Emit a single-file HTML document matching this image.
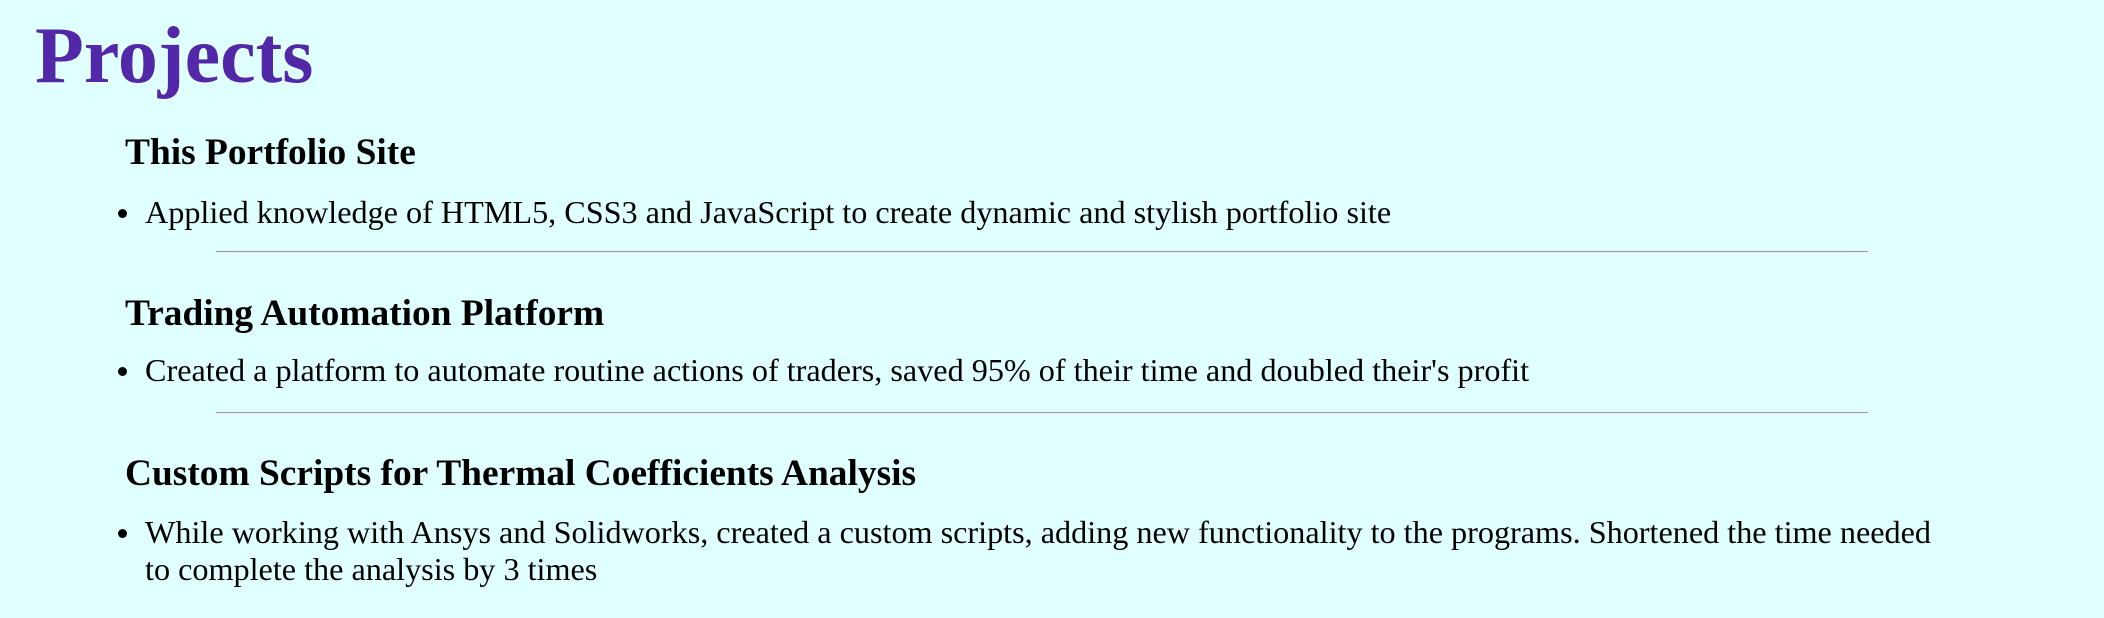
<!DOCTYPE html>
<html><head><meta charset="utf-8"><style>
html,body{margin:0;padding:0}
body{width:2104px;height:618px;background:#e0ffff;position:relative;overflow:hidden;font-family:"Liberation Serif",serif;color:#000}
.a{position:absolute;white-space:nowrap;line-height:1}
h1{position:absolute;margin:0;left:35px;top:16px;font-size:80px;line-height:1;color:#5228a8;font-weight:bold}
.h{font-size:37.4px;font-weight:bold;left:125px}
.t{font-size:32.2px;left:145px}
.d{position:absolute;width:9px;height:9px;border-radius:50%;background:#000;left:118px}
.hr{position:absolute;left:216px;width:1652px;height:1px;background:#999;border-bottom:1px solid #eee}
</style></head><body>
<h1>Projects</h1>
<div class="a h" style="top:134px">This Portfolio Site</div>
<div class="d" style="top:209px"></div>
<div class="a t" style="top:196px">Applied knowledge of HTML5, CSS3 and JavaScript to create dynamic and stylish portfolio site</div>
<div class="hr" style="top:251px"></div>
<div class="a h" style="top:295px">Trading Automation Platform</div>
<div class="d" style="top:367px"></div>
<div class="a t" style="top:354px">Created a platform to automate routine actions of traders, saved 95% of their time and doubled their's profit</div>
<div class="hr" style="top:412px"></div>
<div class="a h" style="top:455px">Custom Scripts for Thermal Coefficients Analysis</div>
<div class="d" style="top:529px"></div>
<div class="a t" style="top:516px">While working with Ansys and Solidworks, created a custom scripts, adding new functionality to the programs. Shortened the time needed</div>
<div class="a t" style="top:553px">to complete the analysis by 3 times</div>
</body></html>
